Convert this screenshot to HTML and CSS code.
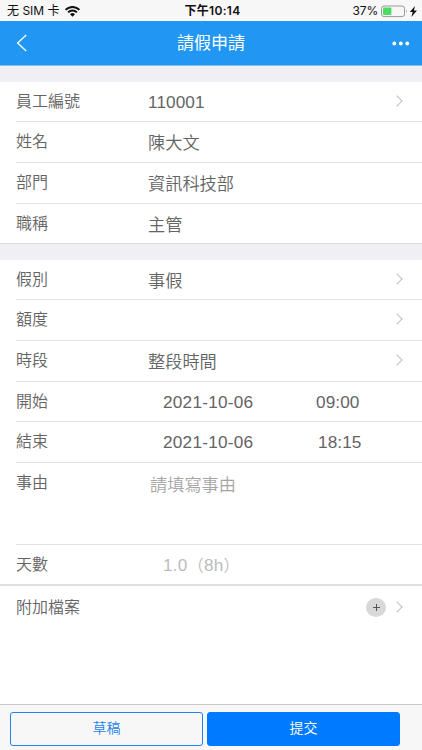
FILE: index.html
```html
<!DOCTYPE html>
<html lang="zh-Hant">
<head>
<meta charset="utf-8">
<title>請假申請</title>
<link rel="stylesheet" href="styles.css">
</head>
<body>
<div class="status">
  <div class="carrier"><span lang="zh-Hans">无 SIM 卡</span>
    <svg width="15" height="11" viewBox="0 0 15 11"><path d="M.6 3.8a9.8 9.8 0 0 1 13.8 0M3.1 6.4a6.2 6.2 0 0 1 8.8 0" fill="none" stroke="#111" stroke-width="2"/><path d="M5 8.2a3.6 3.6 0 0 1 5 0L7.5 10.8z" fill="#111"/></svg>
  </div>
  <div class="clock">下午10:14</div>
  <div class="power">37%
    <svg width="37" height="13" viewBox="0 0 37 13"><rect x=".5" y="1" width="23" height="10.6" rx="2.5" fill="none" stroke="#999"/><rect x="2" y="2.6" width="8.4" height="7.4" rx="1" fill="#4cd964"/><path d="M25 4.5q1.6 1.8 0 3.6z" fill="#999"/><path d="M34 1L28.8 7h2.9l-1.3 5L36 5.6h-3.1z" fill="#111"/></svg>
  </div>
</div>
<header class="nav">
  <svg class="back" width="12" height="18" viewBox="0 0 12 18"><path d="M10.2 1L1.6 9l8.6 8" fill="none" stroke="#fff" stroke-width="1.3"/></svg>
  <h1>請假申請</h1>
  <svg class="more" width="18" height="5" viewBox="0 0 18 5"><g fill="#fff"><circle cx="2.3" cy="2.5" r="1.9"/><circle cx="8.8" cy="2.5" r="1.9"/><circle cx="15.3" cy="2.5" r="1.9"/></g></svg>
</header>
<main>
  <section class="group person">
    <div class="row"><label>員工編號</label><span class="value latin">110001</span><i class="arrow"></i></div>
    <div class="row"><label>姓名</label><span class="value">陳大文</span></div>
    <div class="row"><label>部門</label><span class="value">資訊科技部</span></div>
    <div class="row"><label>職稱</label><span class="value">主管</span></div>
  </section>
  <section class="group leave">
    <div class="row"><label>假別</label><span class="value">事假</span><i class="arrow"></i></div>
    <div class="row"><label>額度</label><span class="value"></span><i class="arrow"></i></div>
    <div class="row"><label>時段</label><span class="value">整段時間</span><i class="arrow"></i></div>
    <div class="row"><label>開始</label><span class="value latin date">2021-10-06</span><span class="latin time">09:00</span></div>
    <div class="row"><label>結束</label><span class="value latin date">2021-10-06</span><span class="latin time end">18:15</span></div>
    <div class="row reason"><label>事由</label><span class="value hint">請填寫事由</span></div>
    <div class="row"><label>天數</label><span class="value latin date days">1.0<span class="paren">（</span>8h<span class="paren">）</span></span></div>
  </section>
  <section class="files">
    <div class="row"><label>附加檔案</label><span class="value"></span><span class="add"><svg width="7" height="7" viewBox="0 0 7 7"><path d="M3.5 0v7M0 3.5h7" stroke="#555" stroke-width="1"/></svg></span><i class="arrow"></i></div>
  </section>
</main>
<footer class="actions">
  <button class="draft">草稿</button>
  <button class="submit">提交</button>
</footer>
</body>
</html>
```
FILE: styles.css
```css
* { box-sizing: border-box; }
body {
  margin: 0;
  height: 750px;
  display: flex;
  flex-direction: column;
  overflow: hidden;
  background: #fff;
  color: #646464;
  font-family: "Noto Sans CJK TC", sans-serif;
  font-weight: 350;
}
.status {
  height: 21px;
  padding: 1px 4px 0 7px;
  display: grid;
  grid-template-columns: 1fr auto 1fr;
  align-items: center;
  background: #f7f7f7;
  color: #111;
  font: 400 12px/20px Inter, "Noto Sans CJK SC", sans-serif;
}
.carrier, .power { display: flex; align-items: center; }
.carrier { gap: 6px; }
.carrier svg { margin-left: -1px; }
.power { justify-content: flex-end; gap: 3px; letter-spacing: -.2px; }
.clock { font-weight: 600; letter-spacing: .3px; }
.nav {
  height: 45px;
  padding: 0 12px 0 16px;
  display: flex;
  align-items: center;
  justify-content: space-between;
  background: #2196f3;
  border-bottom: 1px solid #7fc0f5;
  color: #fff;
}
.nav h1 { margin: 0; padding-bottom: 2px; font-size: 17px; line-height: 42px; font-weight: 400; }
.back { margin-right: 2px; }
main { flex: 1; background: #fff; }
.group {
  border-top: 16px solid #efeff4;
  background: #fff;
}
.person { height: 178px; border-bottom: 1px solid #dcdce0; }
.leave { height: 342px; border-bottom: 2px solid #e0e0e2; }
.person .row:first-child { height: 40px; }
.leave .row:first-child { height: 40px; }
.row {
  height: 40.75px;
  margin-left: 16px;
  padding-right: 21px;
  display: flex;
  border-bottom: 1px solid #e2e2e4;
  font-size: 16px;
  line-height: 37px;
}
.row:last-child { border-bottom: 0; }
label { width: 132px; flex: none; }
.value { flex: 1; font-size: 17.2px; line-height: 39px; }
.latin { font-family: "Liberation Sans", "Noto Sans CJK TC", sans-serif; font-size: 17.2px; letter-spacing: .1px; line-height: 40px; }
.value.latin { line-height: 40px; }
.date { padding-left: 15px; letter-spacing: .25px; }
.time { width: 85px; }
.time.end { width: 83px; }
.reason { height: 81.5px; }
.value.hint { padding-left: 2px; color: #a6a6a6; line-height: 41px; }
.days { color: #bbb; }
.value.days { line-height: 41px; }
.paren { font-family: "Noto Sans CJK TC", sans-serif; font-size: 16px; line-height: 1; }
.arrow {
  width: 8px;
  height: 8px;
  margin-top: 15px;
  border-top: 1px solid #c0c0c4;
  border-right: 1px solid #c0c0c4;
  transform: rotate(45deg);
}
.files .row { line-height: 40px; }
.files .arrow { margin-top: 17px; }
.add {
  width: 20px;
  height: 19px;
  margin: 12px 7px 0 0;
  display: grid;
  place-items: center;
  border-radius: 50%;
  background: #d8d8d8;
}
.actions {
  height: 46px;
  padding: 7px 22px 4px 10px;
  display: grid;
  grid-template-columns: 193px 1fr;
  gap: 4px;
  background: #f7f7f7;
  border-top: 1px solid #c8c8ca;
}
button {
  margin: 0;
  padding: 0 0 4px;
  border: 1px solid #2482ec;
  border-radius: 3px;
  font: 350 14px/28px "Noto Sans CJK TC", sans-serif;
}
.draft { background: transparent; color: #2482ec; }
.submit { background: #007aff; border-color: #007aff; color: #fff; }
```
